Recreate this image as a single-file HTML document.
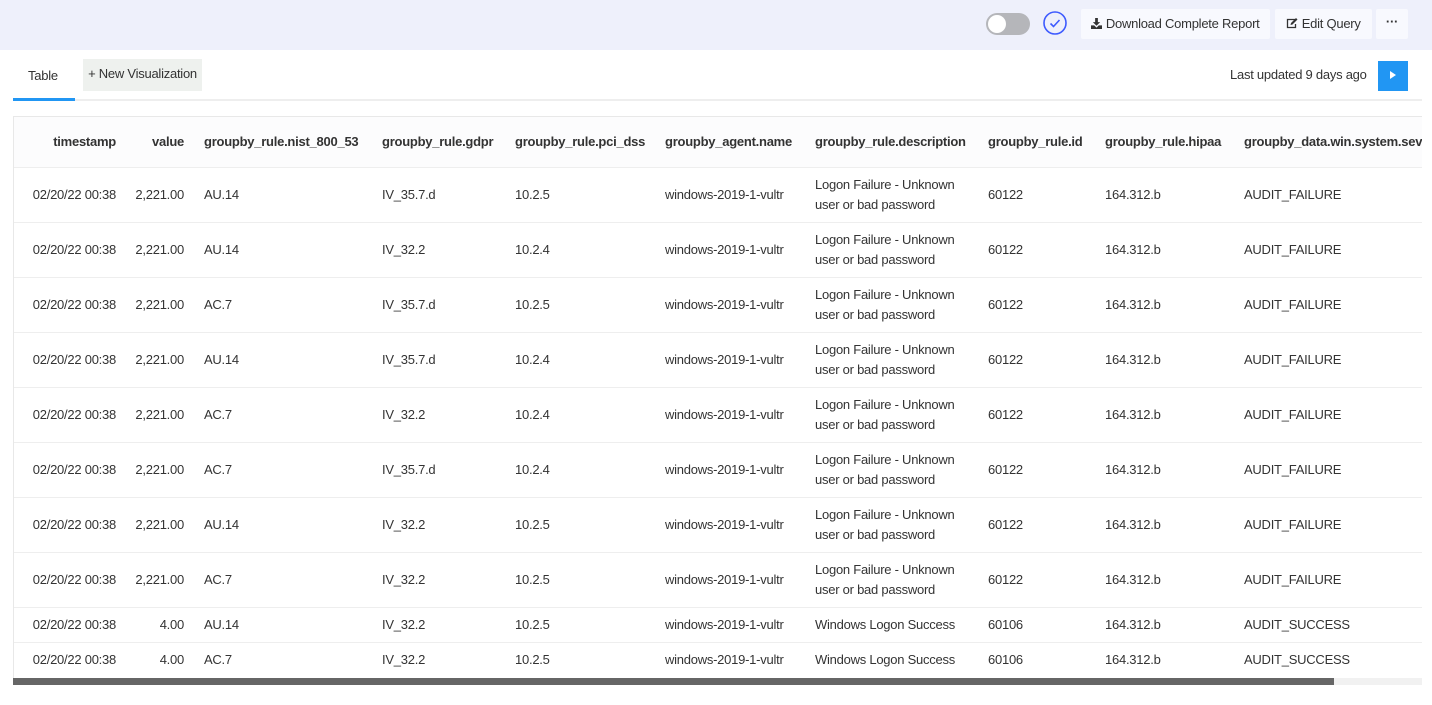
<!DOCTYPE html>
<html><head><meta charset="utf-8">
<style>
*{box-sizing:border-box;margin:0;padding:0}
body{width:1432px;height:705px;background:#fff;font-family:"Liberation Sans",sans-serif;font-size:13px;color:#333;position:relative;overflow:hidden;letter-spacing:-0.25px}
.topbar{position:absolute;left:0;top:0;width:1432px;height:50px;background:#eef0fb}
.btn{position:absolute;top:9px;height:30px;background:#f8f9fe;border-radius:2px;line-height:30px;font-size:13px;color:#333;text-align:center}
.a{position:absolute;white-space:nowrap}
.tbl{position:absolute;left:13px;top:116px;width:1409px;height:562px;border-left:1px solid #e8e8e8;border-top:1px solid #e8e8e8;overflow:hidden}
.hdr{position:absolute;left:0;top:0;width:100%;height:51px;background:#fcfcfd;border-bottom:1px solid #eee}
.row{position:absolute;left:0;width:100%;border-bottom:1px solid #eee}
.h55{height:55px}.h35{height:35px}
.c{position:absolute;white-space:nowrap;line-height:20px}
.h55 .c{top:17px}.h35 .c{top:7px}
.h55 .c.d{top:7px}
.r{text-align:right}
.c1{left:0;width:102px;text-align:right}.c2{left:110px;width:60px;text-align:right}
.c3{left:190px}.c4{left:368px}.c5{left:501px}.c6{left:651px}.c7{left:801px}.c8{left:974px}.c9{left:1091px}.c10{left:1230px}
.hdr .c{top:15px;font-weight:bold}
</style></head><body>
<div class="topbar"></div>
<div style="position:absolute;left:986px;top:13px;width:44px;height:22px;border-radius:11px;background:#b5b6ba"></div>
<div style="position:absolute;left:988px;top:15px;width:18px;height:18px;border-radius:9px;background:#fff"></div>
<svg style="position:absolute;left:1043px;top:11px" width="24" height="24" viewBox="0 0 24 24"><circle cx="12" cy="12" r="11" fill="none" stroke="#3d5afe" stroke-width="1.6"/><path d="M7.5 12.5l3 3 6-6.5" fill="none" stroke="#3d5afe" stroke-width="1.6"/></svg>
<div class="btn" style="left:1081px;width:189px"><svg width="11" height="11" viewBox="0 0 12 12" style="vertical-align:-1px"><path d="M4.5 0h3v4.5h2.5L6 8.5 2 4.5h2.5z M0 8h3.5l2.5 2.5L8.5 8H12v4H0z" fill="#333"/></svg> Download Complete Report</div>
<div class="btn" style="left:1275px;width:97px"><svg width="12" height="11" viewBox="0 0 12 11" style="vertical-align:-1px"><path d="M9 1.5H1.5v8h8V6" fill="none" stroke="#333" stroke-width="1.3"/><path d="M4.5 7l.5-2 5-5 1.5 1.5-5 5z" fill="#333"/></svg> Edit Query</div>
<div class="btn" style="left:1376px;width:32px;font-weight:bold;line-height:26px">···</div>

<div class="a" style="left:28px;top:68px;line-height:16px">Table</div>
<div style="position:absolute;left:13px;top:99px;width:1409px;height:2px;background:#eee"></div>
<div style="position:absolute;left:13px;top:98px;width:62px;height:3px;background:#2196f3"></div>
<div class="a" style="left:83px;top:59px;width:119px;height:32px;background:#eef1ee;line-height:30px;text-align:center">+ New Visualization</div>
<div class="a" style="left:1230px;top:67px;line-height:16px">Last updated 9 days ago</div>
<div style="position:absolute;left:1378px;top:61px;width:30px;height:30px;background:#2196f3"></div>
<div style="position:absolute;left:1390px;top:71px;width:0;height:0;border-left:6px solid #fff;border-top:4.5px solid transparent;border-bottom:4.5px solid transparent"></div>

<div class="tbl">
<div class="hdr">
<div class="c c1">timestamp</div><div class="c c2">value</div><div class="c c3">groupby_rule.nist_800_53</div><div class="c c4">groupby_rule.gdpr</div><div class="c c5">groupby_rule.pci_dss</div><div class="c c6">groupby_agent.name</div><div class="c c7">groupby_rule.description</div><div class="c c8">groupby_rule.id</div><div class="c c9">groupby_rule.hipaa</div><div class="c c10">groupby_data.win.system.severityValue</div>
</div>

<div class="row h55" style="top:51px"><div class="c c1">02/20/22 00:38</div><div class="c c2">2,221.00</div><div class="c c3">AU.14</div><div class="c c4">IV_35.7.d</div><div class="c c5">10.2.5</div><div class="c c6">windows-2019-1-vultr</div><div class="c c7 d">Logon Failure - Unknown<br>user or bad password</div><div class="c c8">60122</div><div class="c c9">164.312.b</div><div class="c c10">AUDIT_FAILURE</div></div>
<div class="row h55" style="top:106px"><div class="c c1">02/20/22 00:38</div><div class="c c2">2,221.00</div><div class="c c3">AU.14</div><div class="c c4">IV_32.2</div><div class="c c5">10.2.4</div><div class="c c6">windows-2019-1-vultr</div><div class="c c7 d">Logon Failure - Unknown<br>user or bad password</div><div class="c c8">60122</div><div class="c c9">164.312.b</div><div class="c c10">AUDIT_FAILURE</div></div>
<div class="row h55" style="top:161px"><div class="c c1">02/20/22 00:38</div><div class="c c2">2,221.00</div><div class="c c3">AC.7</div><div class="c c4">IV_35.7.d</div><div class="c c5">10.2.5</div><div class="c c6">windows-2019-1-vultr</div><div class="c c7 d">Logon Failure - Unknown<br>user or bad password</div><div class="c c8">60122</div><div class="c c9">164.312.b</div><div class="c c10">AUDIT_FAILURE</div></div>
<div class="row h55" style="top:216px"><div class="c c1">02/20/22 00:38</div><div class="c c2">2,221.00</div><div class="c c3">AU.14</div><div class="c c4">IV_35.7.d</div><div class="c c5">10.2.4</div><div class="c c6">windows-2019-1-vultr</div><div class="c c7 d">Logon Failure - Unknown<br>user or bad password</div><div class="c c8">60122</div><div class="c c9">164.312.b</div><div class="c c10">AUDIT_FAILURE</div></div>
<div class="row h55" style="top:271px"><div class="c c1">02/20/22 00:38</div><div class="c c2">2,221.00</div><div class="c c3">AC.7</div><div class="c c4">IV_32.2</div><div class="c c5">10.2.4</div><div class="c c6">windows-2019-1-vultr</div><div class="c c7 d">Logon Failure - Unknown<br>user or bad password</div><div class="c c8">60122</div><div class="c c9">164.312.b</div><div class="c c10">AUDIT_FAILURE</div></div>
<div class="row h55" style="top:326px"><div class="c c1">02/20/22 00:38</div><div class="c c2">2,221.00</div><div class="c c3">AC.7</div><div class="c c4">IV_35.7.d</div><div class="c c5">10.2.4</div><div class="c c6">windows-2019-1-vultr</div><div class="c c7 d">Logon Failure - Unknown<br>user or bad password</div><div class="c c8">60122</div><div class="c c9">164.312.b</div><div class="c c10">AUDIT_FAILURE</div></div>
<div class="row h55" style="top:381px"><div class="c c1">02/20/22 00:38</div><div class="c c2">2,221.00</div><div class="c c3">AU.14</div><div class="c c4">IV_32.2</div><div class="c c5">10.2.5</div><div class="c c6">windows-2019-1-vultr</div><div class="c c7 d">Logon Failure - Unknown<br>user or bad password</div><div class="c c8">60122</div><div class="c c9">164.312.b</div><div class="c c10">AUDIT_FAILURE</div></div>
<div class="row h55" style="top:436px"><div class="c c1">02/20/22 00:38</div><div class="c c2">2,221.00</div><div class="c c3">AC.7</div><div class="c c4">IV_32.2</div><div class="c c5">10.2.5</div><div class="c c6">windows-2019-1-vultr</div><div class="c c7 d">Logon Failure - Unknown<br>user or bad password</div><div class="c c8">60122</div><div class="c c9">164.312.b</div><div class="c c10">AUDIT_FAILURE</div></div>
<div class="row h35" style="top:491px"><div class="c c1">02/20/22 00:38</div><div class="c c2">4.00</div><div class="c c3">AU.14</div><div class="c c4">IV_32.2</div><div class="c c5">10.2.5</div><div class="c c6">windows-2019-1-vultr</div><div class="c c7">Windows Logon Success</div><div class="c c8">60106</div><div class="c c9">164.312.b</div><div class="c c10">AUDIT_SUCCESS</div></div>
<div class="row h35" style="top:526px;border-bottom:none"><div class="c c1">02/20/22 00:38</div><div class="c c2">4.00</div><div class="c c3">AC.7</div><div class="c c4">IV_32.2</div><div class="c c5">10.2.5</div><div class="c c6">windows-2019-1-vultr</div><div class="c c7">Windows Logon Success</div><div class="c c8">60106</div><div class="c c9">164.312.b</div><div class="c c10">AUDIT_SUCCESS</div></div>
</div>
<div style="position:absolute;left:13px;top:678px;width:1409px;height:7px;background:#f1f1f1"></div>
<div style="position:absolute;left:13px;top:678px;width:1321px;height:7px;background:#666"></div>
</body></html>
